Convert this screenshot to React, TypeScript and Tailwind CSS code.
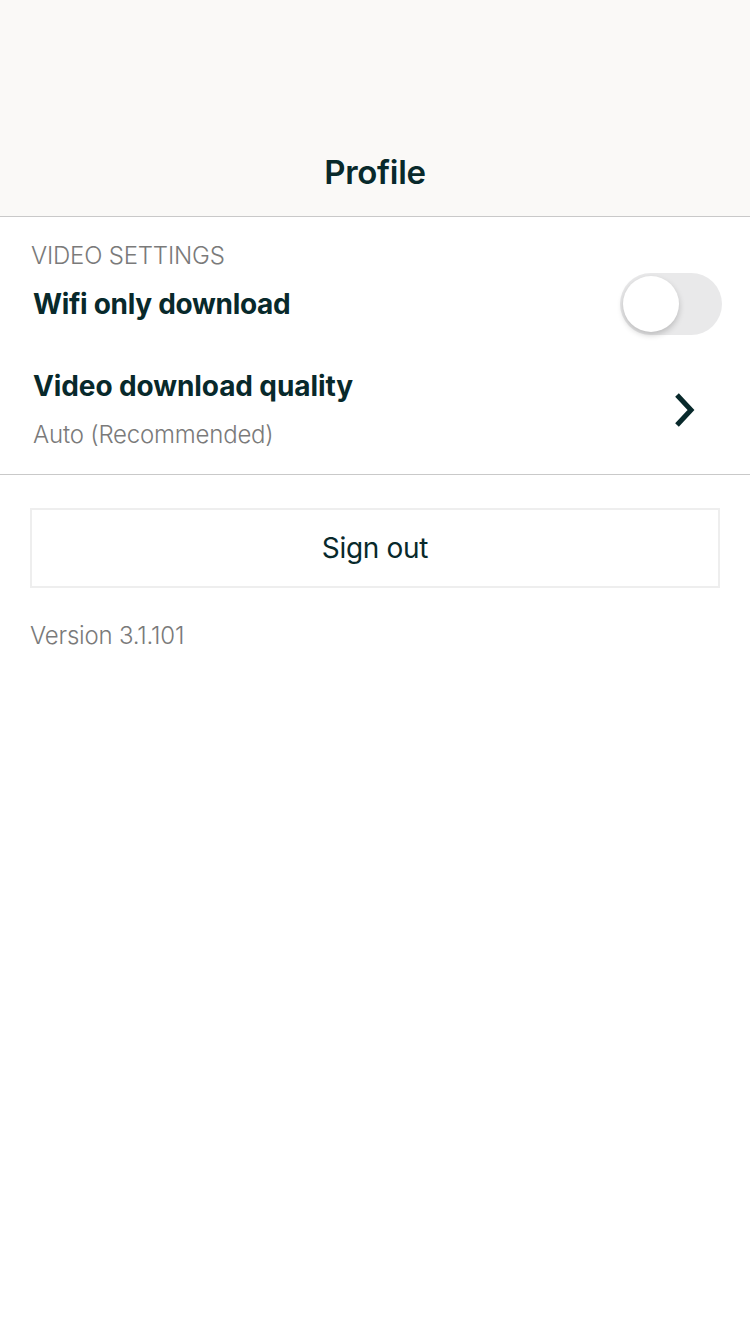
import React from 'react';

export default function App() {
  return (
    <div className="min-h-[1334px] w-[750px] bg-white font-['Inter',sans-serif] text-[#08292b]">
      {/* Header */}
      <div className="h-[217px] bg-[#faf9f7] border-b border-[#c9c9c9] flex items-end justify-center pb-[24px]">
        <h1 className="text-[33px] font-semibold leading-[40px] tracking-[-0.3px]">Profile</h1>
      </div>

      {/* Video settings */}
      <div className="border-b border-[#c9c9c9]">
        <div className="pl-[31px] pt-[24px] text-[24px] leading-[30px] text-[#7a7a7a] font-light tracking-[-0.2px]">VIDEO SETTINGS</div>
        <div className="flex items-center justify-between pl-[33px] pr-[28px] h-[66px]">
          <span className="text-[28px] font-bold leading-[34px] tracking-[-0.3px]">Wifi only download</span>
          <div className="w-[102px] h-[62px] rounded-full bg-[#e9e9ea] p-[3px] flex items-center">
            <div className="w-[56px] h-[56px] rounded-full bg-white shadow-[0_3px_6px_rgba(0,0,0,0.2)]" />
          </div>
        </div>
        <div className="flex items-center justify-between pl-[33px] pr-[52px] pt-[32px] pb-[24px]">
          <div className="flex flex-col gap-[17px]">
            <span className="text-[28px] font-bold leading-[34px] tracking-[-0.1px]">Video download quality</span>
            <span className="text-[24px] leading-[30px] text-[#7a7a7a] font-light tracking-[-0.2px]">Auto (Recommended)</span>
          </div>
          <svg width="26" height="36" viewBox="0 0 26 36" fill="none">
            <path d="M5 3 L19 18 L5 33" stroke="#08292b" strokeWidth="5" strokeLinejoin="miter" />
          </svg>
        </div>
      </div>

      {/* Sign out */}
      <div className="px-[30px] pt-[33px]">
        <button className="w-full h-[80px] border-2 border-[#eeeeee] text-[28px] leading-[34px] text-[#08292b] tracking-[-0.3px] flex items-center justify-center">
          Sign out
        </button>
        <div className="pt-[33px] text-[24px] leading-[30px] text-[#7a7a7a] font-light tracking-[-0.2px]">Version 3.1.101</div>
      </div>
    </div>
  );
}
